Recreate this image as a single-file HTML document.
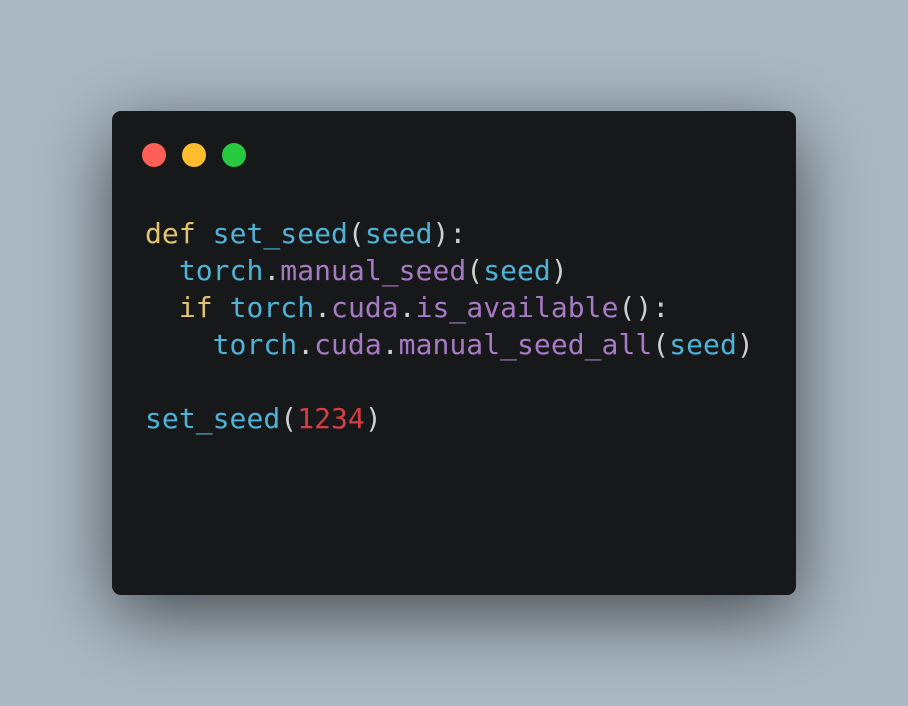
<!DOCTYPE html>
<html><head><meta charset="utf-8"><style>
html,body{margin:0;padding:0}
body{width:908px;height:706px;background:#abb8c3;position:relative;overflow:hidden}
.win{position:absolute;left:112px;top:111px;width:684px;height:484px;background:#17181a;border-radius:9px;box-shadow:0 20px 75px rgba(0,0,0,0.6)}
.dot{position:absolute;top:32px;width:24px;height:24px;border-radius:50%}
pre{position:absolute;left:33px;top:104px;margin:0;font-family:"DejaVu Sans Mono","Liberation Mono",monospace;font-size:28px;line-height:37px;color:#c8c8c8;letter-spacing:0.05px}
.k{color:#e3c46e}.b{color:#4fb3d8}.p{color:#a77ac4}.n{color:#d63d45}.w{color:#cfcfcf}
</style></head><body>
<div class="win">
<div class="dot" style="left:30px;background:#ff5f56"></div>
<div class="dot" style="left:70px;background:#ffbd2e"></div>
<div class="dot" style="left:110px;background:#27c93f"></div>
<pre><span class="k">def</span> <span class="b">set_seed</span><span class="w">(</span><span class="b">seed</span><span class="w">):</span>
  <span class="b">torch</span><span class="w">.</span><span class="p">manual_seed</span><span class="w">(</span><span class="b">seed</span><span class="w">)</span>
  <span class="k">if</span> <span class="b">torch</span><span class="w">.</span><span class="p">cuda</span><span class="w">.</span><span class="p">is_available</span><span class="w">():</span>
    <span class="b">torch</span><span class="w">.</span><span class="p">cuda</span><span class="w">.</span><span class="p">manual_seed_all</span><span class="w">(</span><span class="b">seed</span><span class="w">)</span>

<span class="b">set_seed</span><span class="w">(</span><span class="n">1234</span><span class="w">)</span></pre>
</div>
</body></html>
